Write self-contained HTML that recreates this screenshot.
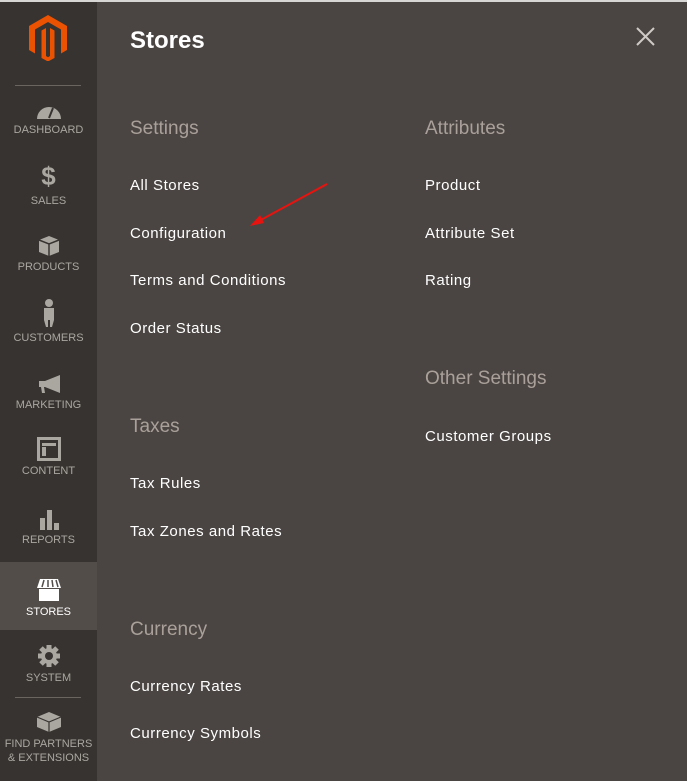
<!DOCTYPE html>
<html><head><style>
*{margin:0;padding:0;box-sizing:border-box}
body{width:687px;height:781px;overflow:hidden;background:#4a4542;font-family:"Liberation Sans",sans-serif;position:relative}
#top{position:absolute;left:0;top:0;width:687px;height:2px;background:#d8d6d4}
#side{position:absolute;left:0;top:2px;width:97px;height:779px;background:#373330}
.it{position:absolute;left:0;width:97px;text-align:center;color:#aaa6a0;font-size:11px}
.it svg{display:block;margin:0 auto 4px}
.act{background:#524d49;color:#fff}
.sep{position:absolute;left:15px;width:66px;height:1px;background:#6b6560}
.p{position:absolute;color:#fff;font-size:15px;letter-spacing:0.55px}
.h{position:absolute;color:#aaa09a;font-size:19px}
</style></head><body>
<div id="top"></div>
<div id="side">
<svg style="position:absolute;left:29px;top:13px" width="38" height="46" viewBox="0 0 38 46"><path d="M19 0L38 11V35L32 38.5V14.5L19 7L6 14.5V38.5L0 35V11Z" fill="#eb5202"/><path d="M12.5 15.5L17 13V41L19 42.2L21 41V13L25.5 15.5V43L19 46.5L12.5 43Z" fill="#eb5202"/></svg>
<div class="sep" style="top:83px"></div>
<div class="it" style="top:98px"><svg width="26" height="20" viewBox="0 0 26 20"><path d="M1 19A12 12 0 0 1 25 19Z" fill="#aaa6a0"/><path d="M13 18L17 8" stroke="#373330" stroke-width="2"/></svg>DASHBOARD</div>
<div class="it" style="top:161px"><div style="font-size:26px;font-weight:bold;line-height:26px;margin-bottom:6px">$</div>SALES</div>
<div class="it" style="top:233px"><svg width="22" height="22" viewBox="0 0 22 22"><path d="M11 1L21 5V17L11 21L1 17V5Z" fill="#aaa6a0"/><path d="M1 5L11 9L21 5M11 9V21" stroke="#373330" stroke-width="1.5" fill="none"/></svg>PRODUCTS</div>
<div class="it" style="top:296px"><svg width="14" height="30" viewBox="0 0 14 30"><circle cx="7" cy="5" r="4" fill="#aaa6a0"/><path d="M2 10H12V22L10 29H8V22H6V29H4L2 22Z" fill="#aaa6a0"/></svg>CUSTOMERS</div>
<div class="it" style="top:371px"><svg width="26" height="22" viewBox="0 0 26 22"><path d="M3 8H9L24 2V20L9 14H8L9 20H6L5 14H3Z" fill="#aaa6a0"/></svg>MARKETING</div>
<div class="it" style="top:435px"><svg width="24" height="24" viewBox="0 0 24 24"><rect x="1.5" y="1.5" width="21" height="21" fill="none" stroke="#aaa6a0" stroke-width="3"/><rect x="5" y="6" width="14" height="3" fill="#aaa6a0"/><rect x="5" y="10" width="4" height="9" fill="#aaa6a0"/></svg>CONTENT</div>
<div class="it" style="top:506px"><svg width="22" height="22" viewBox="0 0 22 22"><rect x="2" y="10" width="5" height="12" fill="#aaa6a0"/><rect x="9" y="2" width="5" height="20" fill="#aaa6a0"/><rect x="16" y="15" width="5" height="7" fill="#aaa6a0"/></svg>REPORTS</div>
<div class="it act" style="top:560px;height:68px;padding-top:16px"><svg width="26" height="24" viewBox="0 0 26 24"><path d="M4 1H22L25 10H1Z" fill="#fff"/><path d="M8 2L6 9M12 2V9M16 2L17 9M20 2L22 9" stroke="#524d49" stroke-width="1.5"/><rect x="3" y="11" width="20" height="12" fill="#fff"/></svg>STORES</div>
<div class="it" style="top:642px"><svg width="24" height="24" viewBox="0 0 24 24"><circle cx="12" cy="12" r="8" fill="#aaa6a0"/><g stroke="#aaa6a0" stroke-width="5"><path d="M12 1V23M1 12H23M4 4L20 20M20 4L4 20"/></g><circle cx="12" cy="12" r="4" fill="#373330"/></svg>SYSTEM</div>
<div class="sep" style="top:695px"></div>
<div class="it" style="top:707px;line-height:14px"><svg width="26" height="24" viewBox="0 0 26 24"><path d="M13 3L25 8V18L13 23L1 18V8Z" fill="#aaa6a0"/><path d="M1 8L13 13L25 8M13 13V23" stroke="#373330" stroke-width="1.2" fill="none"/></svg>FIND PARTNERS<br>&amp; EXTENSIONS</div>
</div>
<div class="p" style="left:130px;top:27px;font-size:24px;font-weight:bold;letter-spacing:0">Stores</div>
<svg style="position:absolute;left:636px;top:27px" width="19" height="19"><path d="M1 1L18 18M18 1L1 18" stroke="#cfcac6" stroke-width="2"/></svg>
<div class="h" style="left:130px;top:118px">Settings</div>
<div class="p" style="left:130px;top:177px">All Stores</div>
<div class="p" style="left:130px;top:225px">Configuration</div>
<div class="p" style="left:130px;top:272px">Terms and Conditions</div>
<div class="p" style="left:130px;top:320px">Order Status</div>
<div class="h" style="left:130px;top:416px">Taxes</div>
<div class="p" style="left:130px;top:475px">Tax Rules</div>
<div class="p" style="left:130px;top:523px">Tax Zones and Rates</div>
<div class="h" style="left:130px;top:619px">Currency</div>
<div class="p" style="left:130px;top:678px">Currency Rates</div>
<div class="p" style="left:130px;top:725px">Currency Symbols</div>
<div class="h" style="left:425px;top:118px">Attributes</div>
<div class="p" style="left:425px;top:177px">Product</div>
<div class="p" style="left:425px;top:225px">Attribute Set</div>
<div class="p" style="left:425px;top:272px">Rating</div>
<div class="h" style="left:425px;top:368px">Other Settings</div>
<div class="p" style="left:425px;top:428px">Customer Groups</div>
<svg style="position:absolute;left:245px;top:180px" width="90" height="50"><path d="M82 4L12 42" stroke="#e8130f" stroke-width="2"/><path d="M5 46L15 35L19 43Z" fill="#e8130f"/></svg>
</body></html>
